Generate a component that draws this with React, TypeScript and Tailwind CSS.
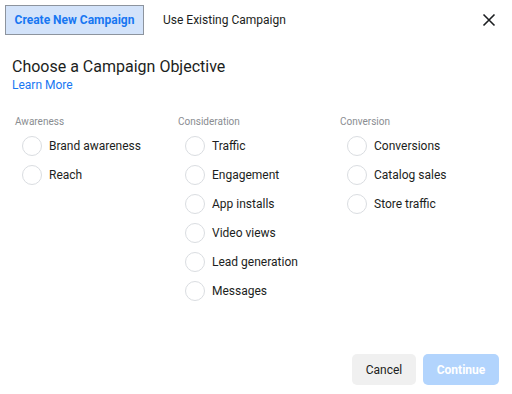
const columns = [
  { title: "Awareness", items: ["Brand awareness", "Reach"] },
  {
    title: "Consideration",
    items: ["Traffic", "Engagement", "App installs", "Video views", "Lead generation", "Messages"],
  },
  { title: "Conversion", items: ["Conversions", "Catalog sales", "Store traffic"] },
];

export default function App() {
  return (
    <div className="w-[512px] h-[394px] bg-white flex flex-col font-['Roboto',sans-serif] text-[#1c1e21]">
      <div className="flex items-center pl-[5px] pr-[16px] pt-[5px]">
        <div className="h-[30px] w-[139px] flex items-center justify-center bg-[#d3e3fa] border border-[#8d949e] text-[#1877f2] text-[12px] font-bold">
          Create New Campaign
        </div>
        <div className="ml-[19px] text-[12px] text-[#1c1e21]">Use Existing Campaign</div>
        <svg className="ml-auto" width="14" height="14" viewBox="0 0 14 14">
          <path d="M1.5 1.5 L12.5 12.5 M12.5 1.5 L1.5 12.5" stroke="#1c1e21" strokeWidth="1.6" />
        </svg>
      </div>

      <div className="pl-[12px] pt-[22px]">
        <h1 className="text-[16px] leading-[20px]">Choose a Campaign Objective</h1>
        <a className="block text-[12px] leading-[16px] text-[#1877f2]">Learn More</a>
      </div>

      <div className="grid grid-cols-[163px_162px_1fr] pl-[15px] pt-[23px]">
        {columns.map((col) => (
          <div key={col.title}>
            <div className="text-[10px] leading-[12px] text-[#8a8d91]">{col.title}</div>
            <div className="flex flex-col gap-[9px] pl-[7px] pt-[8px]">
              {col.items.map((item) => (
                <label key={item} className="flex items-center gap-[7px]">
                  <span className="w-[20px] h-[20px] rounded-full border border-[#dadde1]" />
                  <span className="text-[12px] leading-[20px] text-[#1c1e21]">{item}</span>
                </label>
              ))}
            </div>
          </div>
        ))}
      </div>

      <div className="mt-auto flex justify-end gap-[7px] pr-[13px] pb-[9px]">
        <button className="w-[64px] h-[31px] rounded-[5px] bg-[#f0f0f0] text-[12px] text-[#1c1e21]">
          Cancel
        </button>
        <button className="w-[76px] h-[31px] rounded-[5px] bg-[#b2d4fd] text-[12px] font-bold text-white">
          Continue
        </button>
      </div>
    </div>
  );
}
